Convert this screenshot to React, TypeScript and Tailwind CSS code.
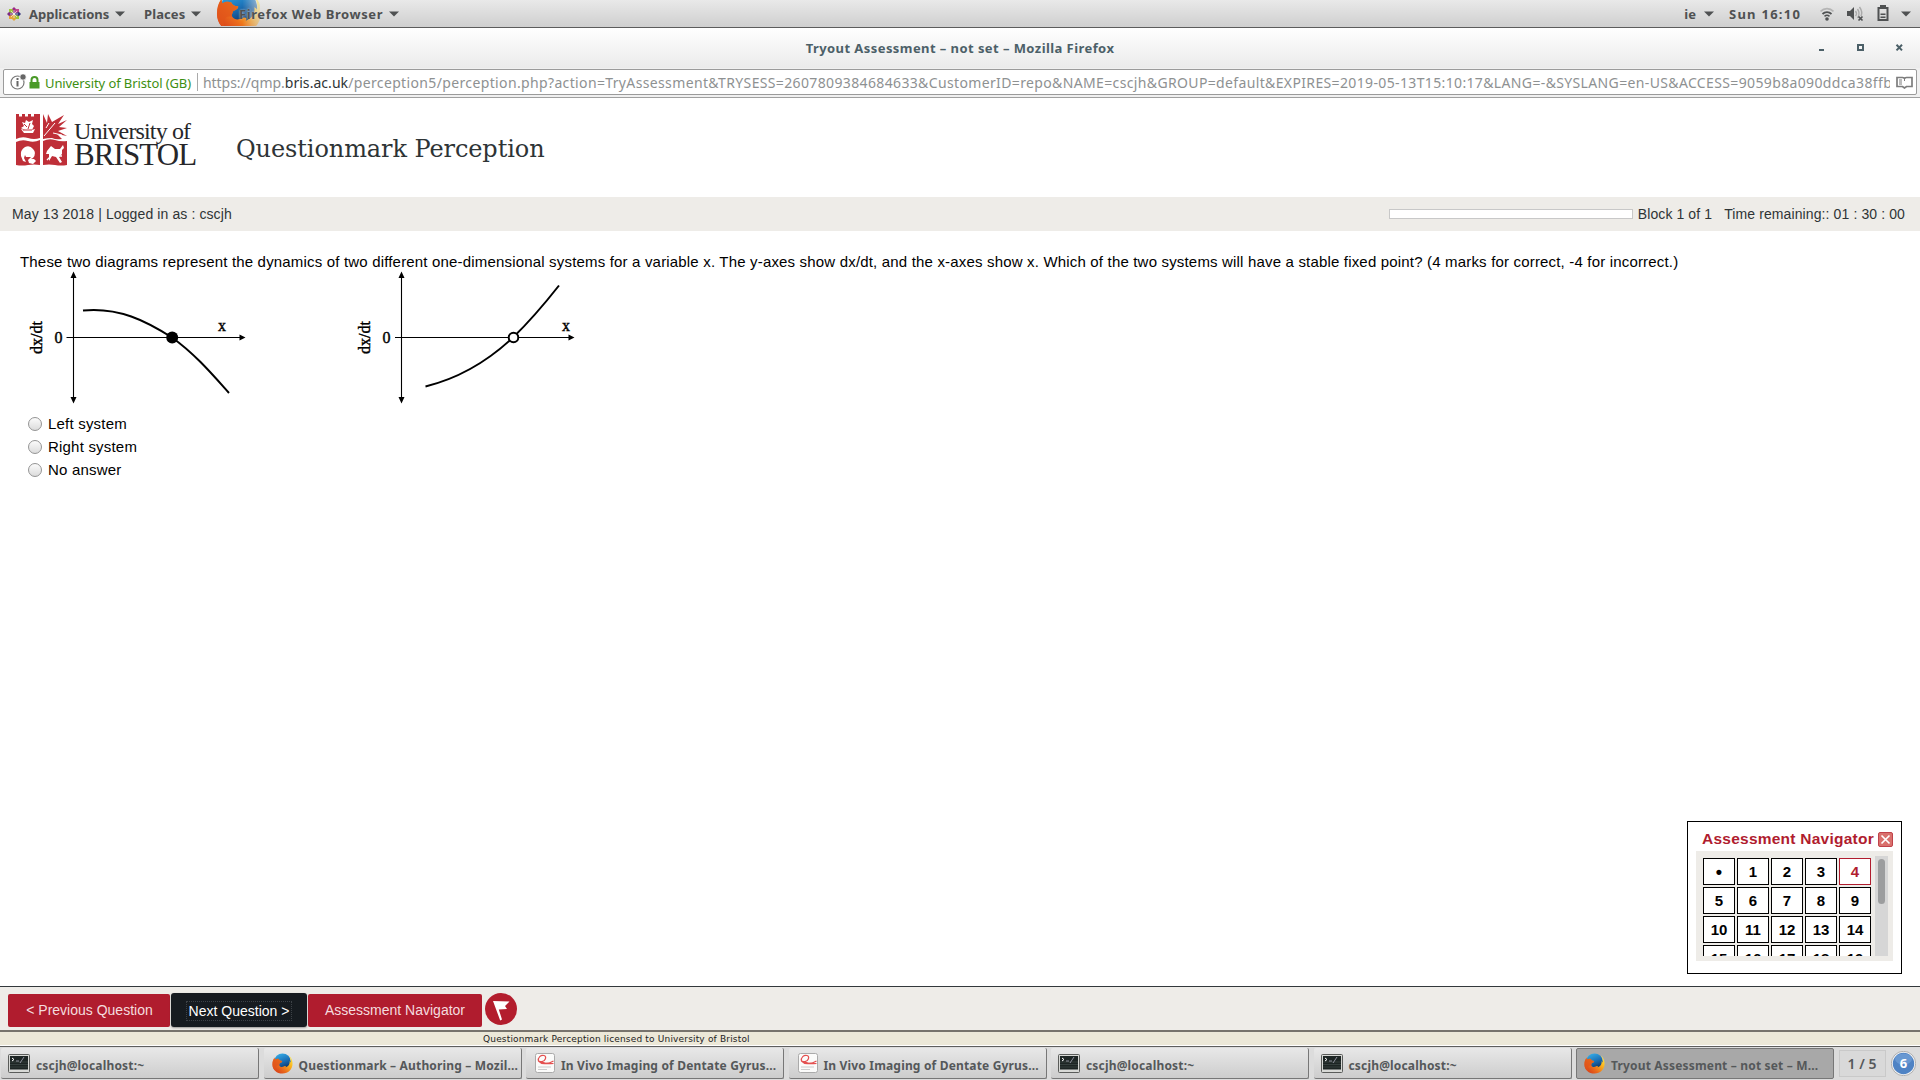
import React from "react";

function Caret({ className = "" }: { className?: string }) {
  return (
    <svg className={"shrink-0 " + className} width="10" height="6" viewBox="0 0 10 6">
      <path d="M0 0.5h10L5 5.5z" fill="#4f5152" />
    </svg>
  );
}

function Firefox({ size, id, className = "" }: { size: number; id: string; className?: string }) {
  return (
    <svg className={"shrink-0 " + className} width={size} height={size} viewBox="0 0 48 48">
      <defs>
        <linearGradient id={id + "o"} x1="1" y1="0.1" x2="0.15" y2="0.9">
          <stop offset="0" stopColor="#fff04a" />
          <stop offset="0.35" stopColor="#fbb31c" />
          <stop offset="0.7" stopColor="#ea6a1c" />
          <stop offset="1" stopColor="#d8401a" />
        </linearGradient>
        <linearGradient id={id + "b"} x1="0.2" y1="0" x2="0.6" y2="1">
          <stop offset="0" stopColor="#36b0ea" />
          <stop offset="0.5" stopColor="#1c72b8" />
          <stop offset="1" stopColor="#0b2c60" />
        </linearGradient>
      </defs>
      <circle cx="24" cy="20" r="19" fill={`url(#${id}b)`} />
      <path d="M38 5c6 5 9 12 9 19 0 13-10 23-23 23S1 38 1 26c0-7 2-12 5-16 0 2 0 4 1 5 3-2 6-2 9-1 1 2 3 4 7 4 1 2-2 4-5 5-1 3-2 4-1 6 3 4 7 3 11 1 3-1 5 1 3 3 8-3 10-9 9-14 2 1 3 2 3 4 1-7-1-13-5-18z" fill={`url(#${id}o)`} />
      <path d="M6 10c0 2 0 4 1 5 3-2 6-2 9-1 1 2 3 4 7 4 1 2-2 4-5 5-1 3-2 4-1 6-5-1-9 1-9 6 0 3 2 6 5 8C5 40 1 33 1 26c0-7 2-12 5-16z" fill="#e2561b" opacity=".75" />
    </svg>
  );
}

function Activities() {
  return (
    <svg className="shrink-0" width="14" height="14" viewBox="0 0 14 14">
      <path d="M7 0l2 2v4H5V2z" fill="#9a2a86" />
      <path d="M14 7l-2 2H8V5h4z" fill="#33337c" />
      <path d="M7 14l-2-2V8h4v4z" fill="#e0a63a" />
      <path d="M0 7l2-2h4v4H2z" fill="#7d2c83" />
      <path d="M2 2h3.500l1 4.500L2 5z" fill="#9cc93a" />
      <path d="M12 2v3l-4.500 1.500L8.500 2z" fill="#c1478f" />
      <path d="M12 12H9L7.500 7.500 12 9z" fill="#9cc93a" />
      <path d="M2 12V9l4.500-1.500L5 12z" fill="#e8a33a" />
      <path d="M7 3v8M3 7h8M4 4l6 6M10 4l-6 6" stroke="#f0f0f0" strokeWidth=".7" />
    </svg>
  );
}

function TopBar() {
  return (
    <div className="flex h-[28px] items-center border-b border-[#5c5c5c] bg-linear-to-b from-[#e9e9e9] to-[#cfcfcf] font-['Noto_Sans'] text-[13px] leading-[28px] font-bold text-[#4f5152]">
      <div className="flex w-[144px] items-center pl-[7px]">
        <Activities />
        <span className="ml-[8px]">Applications</span>
        <Caret className="ml-[6px]" />
      </div>
      <div className="flex w-[72px] items-center">
        <span className="tracking-[0.1px]">Places</span>
        <Caret className="ml-[6px]" />
      </div>
      <div className="relative flex h-[27px] items-center pl-[23px]">
        <div className="absolute top-0 left-0 h-[26px] w-[44px] overflow-hidden mask-r-from-60% mask-r-to-120%">
          <Firefox size={46} id="top" className="-mt-[11px]" />
        </div>
        <span className="relative tracking-[0.580px] [text-shadow:0_0_2px_#ddd]">Firefox Web Browser</span>
        <Caret className="ml-[6px]" />
      </div>
      <div className="ml-auto flex items-center pr-[9px]">
        <span>ie</span>
        <Caret className="ml-[8px]" />
        <span className="ml-[15px] w-[73px] tracking-[1.250px] whitespace-nowrap">Sun 16:10</span>
        <svg className="ml-[18px]" width="14" height="14" viewBox="0 0 14 14" fill="none">
          <path d="M0.500 4.500a9 9 0 0 1 13 0" stroke="#b5b5b5" strokeWidth="1.800" />
          <path d="M2.500 7a6.500 6.500 0 0 1 9 0" stroke="#4f5152" strokeWidth="1.800" />
          <path d="M4.500 9.300a4 4 0 0 1 5 0" stroke="#4f5152" strokeWidth="1.600" />
          <circle cx="7" cy="12" r="1.800" fill="#4f5152" />
        </svg>
        <svg className="ml-[13px]" width="17" height="16" viewBox="0 0 17 16" fill="none">
          <path d="M0 5h3l4-4v13l-4-4H0z" fill="#4f5152" />
          <path d="M8.500 5q2 2.500 0 5M10.500 3q3 4.500 0 9M12.500 1q3.500 5 1.500 9" stroke="#aaa" strokeWidth="1.400" />
          <path d="M11.500 10.500l4 4m0-4l-4 4" stroke="#4f5152" strokeWidth="1.700" />
        </svg>
        <svg className="mr-px ml-[13px] -translate-y-px" width="12" height="16" viewBox="0 0 12 16">
          <path d="M3 0h6v2h2.500v14H.5V2H3zM2.500 4v10h7V4z" fill="#4f5152" fillRule="evenodd" />
          <path d="M3.500 8.500h5v1.500h-5zM3.500 11.500h5V13h-5z" fill="#4f5152" />
        </svg>
        <Caret className="ml-[11px]" />
      </div>
    </div>
  );
}

function TitleBar() {
  return (
    <div className="relative flex h-[40px] items-center justify-center bg-linear-to-b from-white to-[#ebebeb] font-['Noto_Sans'] text-[13px] font-bold text-[#4c6068]">
      <span className="pt-px tracking-[0.430px]">Tryout Assessment – not set – Mozilla Firefox</span>
      <svg className="absolute top-[16px] left-[1819px]" width="84" height="8" viewBox="0 0 84 8">
        <path d="M0 5h5v2H0zM38 0h7v7h-7zM40 2v3h3V2z" fill="#4c6068" fillRule="evenodd" />
        <path d="M77.500 .8l5.500 5.600M83 .8l-5.500 5.600" stroke="#4c6068" strokeWidth="2" />
      </svg>
    </div>
  );
}

function UrlBar() {
  return (
    <div className="h-[30px] border-b border-[#a0a0a0] bg-[#f0f0f0] px-[3px] pt-[1px]">
      <div className="flex h-[26px] items-center rounded-[2px] border border-[#9b9b9b] bg-white font-['Noto_Sans'] text-[14px] leading-[24px]">
        <svg className="ml-[6px] shrink-0" width="17" height="16" viewBox="0 0 17 16" fill="none">
          <circle cx="7.500" cy="8.500" r="6.500" stroke="#777" strokeWidth="1.200" />
          <path d="M6.500 4h2v2h-2zM6.500 7h2v5.500h-2z" fill="#666" />
          <circle cx="13" cy="3" r="3.200" fill="#666" stroke="#fff" strokeWidth=".8" />
        </svg>
        <svg className="ml-[2px] shrink-0" width="11" height="13" viewBox="0 0 11 13">
          <path d="M0.500 6h10v6.500H.5z" fill="#4a9a28" />
          <path d="M2.500 6.500V4a3 3 0 0 1 6 0v2.500" stroke="#4a9a28" strokeWidth="2" fill="none" />
        </svg>
        <span className="ml-[5px] w-[148px] shrink-0 pt-px text-[13px] tracking-[-0.1px] whitespace-nowrap text-[#3d8f12]">University of Bristol (GB)</span>
        <div className="ml-[4px] h-[18px] w-px shrink-0 bg-[#aaa]" />
        <div className="ml-[5px] w-[1687px] overflow-hidden pt-[2px] tracking-[0.360px] whitespace-nowrap text-[#8e9192]">
          <span className="tracking-[-0.050px]">https://qmp.</span>
          <span className="tracking-[0.050px] text-[#2e3436]">bris.ac.uk</span>
          /perception5/perception.php?action=TryAssessment&amp;TRYSESS=2607809384684633&amp;CustomerID=repo&amp;NAME=cscjh&amp;GROUP=default&amp;EXPIRES=2019-05-13T15:10:17&amp;LANG=-&amp;SYSLANG=en-US&amp;ACCESS=9059b8a090ddca38ffb1
        </div>
        <svg className="ml-[6px] shrink-0" width="17" height="13" viewBox="0 0 17 13" fill="none" stroke="#7d7d7d">
          <path d="M1 1.500h5.500q2 0 2 1.500 0-1.500 2-1.500H16v9h-5.500L8.500 12l-2-1.500H1z" strokeWidth="1.700" />
          <path d="M3 4h3M3 6h3M3 8h3M8.500 3v2" strokeWidth="1" />
        </svg>
      </div>
    </div>
  );
}

function Crest() {
  return (
    <svg className="shrink-0" width="51" height="52" viewBox="0 0 51 52">
      <path d="M0 0h3v2.500h3V0h3v2.500h3V0h3v2.500h3V0h6v24Q18 26 12 24T0 25z" fill="#bf2f38" />
      <path d="M27 0l4 9 1-9 4 8 12-7-6 9 9-4-8 7 8 1-9 3 9 5-10-2 5 5q-6 1-10-1-5 0-9 1z" fill="#bf2f38" />
      <path d="M28 22l11-13M30 14l3-5M37 19l9 2" stroke="#fff" strokeWidth="1" />
      <path d="M0 28q6-3 12-1t12-1v25q-6-1-12 0T0 51z" fill="#bf2f38" />
      <path d="M27 27q6-3 12-1t12 1v24q-6 1-12 0t-12 0z" fill="#bf2f38" />
      <path d="M6 8l3 1 1-3 3 2 4-2-1 4 2 2-2 4 3-1-2 4H8l-3-4 4 1-4-2 3-2z" fill="#fff" />
      <path d="M8 10l3 3M14 9l-2 6M7 16l9 0" stroke="#bf2f38" strokeWidth="1" />
      <path d="M5 42q-1-6 4-9 5-2 8 2 4 4 0 9l-2 1 3 0 2 2-3 3-4-1-1-3 3-3-5 0-1-2-1 3 2 4-3-1z" fill="#fff" />
      <path d="M31 37l4-5 4 3 5 0 3-4 1 3-2 2 0 4-3 3 3 5-2 1-4-6-4-1-3 5 0-7-3 0 1-3z" fill="#fff" />
      <path d="M42 42l4 0M31 46l4-4" stroke="#fff" strokeWidth="1.300" />
    </svg>
  );
}

function Header() {
  return (
    <div className="flex h-[99px] bg-white pt-[16px] pl-[16px]">
      <Crest />
      <div className="ml-[7px] w-[122px] font-['Liberation_Serif'] whitespace-nowrap text-[#27272a]">
        <div className="mt-[5px] h-[24px] text-[24px] leading-[24px] tracking-[-0.850px]">University of</div>
        <div className="text-[31px] leading-[24px] tracking-[-0.9px]">BRISTOL</div>
      </div>
      <h1 className="mt-[20px] ml-[40px] font-['DejaVu_Serif'] text-[24px] leading-[30px] tracking-[-0.090px] text-[#2e3436]">Questionmark Perception</h1>
    </div>
  );
}

function StatusBar() {
  return (
    <div className="flex h-[34px] items-center bg-[#eeece8] pr-[15px] pl-[12px] font-['Liberation_Sans'] text-[14px] text-[#2e3436]">
      <span className="tracking-[0.110px]">May 13 2018 | Logged in as : cscjh</span>
      <div className="ml-auto h-[10px] w-[244px] border border-[#c8c8c8] bg-white" />
      <span className="ml-[5px] tracking-[0.1px]">Block 1 of 1</span>
      <span className="ml-[12px] tracking-[0.110px]">Time remaining:: 01 : 30 : 00</span>
    </div>
  );
}

function Diagrams() {
  return (
    <svg className="block" width="580" height="134" viewBox="20 271 580 134">
      <g fill="none" stroke="#000">
        <path d="M73.500 277v122M66.500 337.500H240M401.500 277v122M395 337.500h174" strokeWidth="1.100" />
        <path d="M83 310.500C119 307 146 321 172 337.500 195 354 212 374 229 393" strokeWidth="2" />
        <path d="M425.500 386.500C460 378 488 361 513 337.500 531 320 546 302 559 285.500" strokeWidth="2" />
      </g>
      <path d="M73.500 271.500l3 6.500h-6zM73.500 403.500l3-6.500h-6zM245.500 337.500l-6-3v6zM401.500 271.500l3 6.500h-6zM401.500 403.500l3-6.500h-6zM574.500 337.500l-6-3v6z" />
      <circle cx="172.200" cy="337.500" r="6" />
      <circle cx="513.500" cy="337.500" r="4.800" fill="#fff" stroke="#000" strokeWidth="2" />
      <g fontFamily="Liberation Serif" fontSize="16" textAnchor="middle" stroke="#000" strokeWidth=".4">
        <text x="58.500" y="343">0</text>
        <text x="386.500" y="343">0</text>
        <text x="222" y="331">x</text>
        <text x="566" y="331">x</text>
        <text transform="translate(42 337.500) rotate(-90)">dx/dt</text>
        <text transform="translate(370 337.500) rotate(-90)">dx/dt</text>
      </g>
    </svg>
  );
}

function Question() {
  return (
    <div className="h-[755px] bg-white pt-[20px] pl-[20px] font-['Liberation_Sans'] text-[15px] text-black">
      <p className="h-[20px] leading-[21px] tracking-[0.177px] whitespace-nowrap">
        These two diagrams represent the dynamics of two different one-dimensional systems for a variable x. The y-axes show dx/dt, and the x-axes show x. Which of the two systems will have a stable fixed point? (4 marks for correct, -4 for incorrect.)
      </p>
      <Diagrams />
      <div className="pt-[7px] pl-[8px]">
        {["Left system", "Right system", "No answer"].map((t) => (
          <div key={t} className="flex h-[23px] items-center gap-[6px]">
            <span className="h-[14px] w-[14px] rounded-full border border-[#949494] bg-linear-to-b from-[#fbfbfb] to-[#dcdcdc]" />
            <span className="pt-px tracking-[0.2px]">{t}</span>
          </div>
        ))}
      </div>
    </div>
  );
}

function Navigator() {
  const cells = ["•", ...Array.from({ length: 19 }, (_, i) => String(i + 1))];
  return (
    <div className="absolute top-[821px] left-[1687px] h-[153px] w-[215px] border border-black bg-white pt-[8px] pl-[8px] font-['Liberation_Sans'] font-bold">
      <div className="flex h-[21px] items-center pb-[3px] pl-[6px] text-[15.500px] text-[#b01c2e]">
        <span className="w-[176px] tracking-[0.240px] whitespace-nowrap">Assessment Navigator</span>
        <svg width="15" height="15" viewBox="0 0 15 15">
          <rect x=".5" y=".5" width="14" height="14" rx="1.500" fill="#d9706c" stroke="#c0424a" />
          <path d="M3.500 3.500l8 8m0-8l-8 8" stroke="#fff" strokeWidth="1.700" />
        </svg>
      </div>
      <div className="flex h-[110px] w-[197px] bg-[#eeece8] py-[5px] pl-[7px]">
        <div className="grid h-[100px] w-[168px] auto-rows-[27px] grid-cols-[repeat(5,32px)] gap-[2px] overflow-hidden pt-[2px]">
          {cells.map((c) => (
            <div
              key={c}
              className={
                c === "4"
                  ? "border border-[#b01c2e] bg-white text-center text-[15px] leading-[26px] text-[#b01c2e]"
                  : c === "•"
                    ? "border border-black bg-white text-center text-[18px] leading-[26px] text-black"
                    : "border border-black bg-white text-center text-[15px] leading-[26px] text-black"
              }
            >
              {c}
            </div>
          ))}
        </div>
        <div className="ml-[4px] h-[100px] w-[13px] bg-[#d6d6d6] px-[3px] pt-[3px]">
          <div className="h-[45px] w-[7px] rounded-full bg-[#9c9d9e]" />
        </div>
      </div>
    </div>
  );
}

function Footer() {
  return (
    <>
      <div className="flex h-[44px] items-start border-t border-[#33383b] bg-[#eeece8] pt-[7px] pl-[8px] font-['Liberation_Sans'] text-[14px] text-white">
        <div className="flex h-[33px] w-[162px] items-center justify-center rounded-[2px] bg-[#b01c2e] pl-px text-[#f4dcdf]">&lt; Previous Question</div>
        <div className="ml-px flex h-[34px] w-[136px] -translate-y-px items-center justify-center rounded-[3px] bg-[#161b20] pt-[1px] shadow-[0_1px_2px_rgba(0,0,0,0.35)]">
          <span className="border border-dotted border-[#3d4247] px-[2px] leading-[18px]">Next Question &gt;</span>
        </div>
        <div className="ml-px flex h-[33px] w-[174px] items-center justify-center rounded-[2px] bg-[#b01c2e] text-[#f4dcdf]">Assessment Navigator</div>
        <svg className="-mt-px ml-[3px]" width="32" height="32" viewBox="0 0 32 32">
          <circle cx="16" cy="16" r="16" fill="#b31d2d" />
          <path d="M8 8L24.500 8.500 20 13 22 16 13.800 16.500 17 26.500 15.200 27.500z" fill="#fff" />
        </svg>
      </div>
      <div className="h-[16px] border-t-2 border-b border-t-[#77736c] border-b-white bg-[#ece8d8] pl-[483px] font-['DejaVu_Sans'] text-[9px] leading-[14px] tracking-[0.170px] text-[#222]">
        Questionmark Perception licensed to University of Bristol
      </div>
    </>
  );
}

function TerminalIcon() {
  return (
    <svg className="shrink-0" width="22" height="19" viewBox="0 0 22 19">
      <rect x=".5" y=".5" width="21" height="18" rx="1" fill="#d8d9d6" stroke="#5a5c5a" />
      <rect x="2" y="2" width="18" height="13.500" fill="#1d2524" />
      <path d="M2 8h18M2 10.500h18M2 13h18" stroke="#3c4845" strokeWidth=".8" />
      <path d="M4 4l2 1.500L4 7" stroke="#fff" fill="none" />
      <path d="M8 7h3M12 9l4-6" stroke="#aab" strokeWidth=".8" />
    </svg>
  );
}

function DocIcon() {
  return (
    <svg className="ml-[2px] shrink-0" width="20" height="20" viewBox="0 0 20 20">
      <rect x=".5" y=".5" width="19" height="19" rx="2" fill="#fbfbfa" stroke="#aaa" />
      <path d="M3.500 8C2.500 4.500 6 1.500 9 2.500s1.500 5.500-2 6-3.500-1-3.500-.5C6 11 12 12 18.500 8M7 9q4 2 11.500 1.500" stroke="#e45050" strokeWidth="1.200" fill="none" />
      <path d="M3 14h13M3 16.500h9" stroke="#ccc" />
    </svg>
  );
}

const tasks = [
  { icon: "term", label: "cscjh@localhost:~" },
  { icon: "fx", label: "Questionmark – Authoring – Mozil..." },
  { icon: "doc", label: "In Vivo Imaging of Dentate Gyrus..." },
  { icon: "doc", label: "In Vivo Imaging of Dentate Gyrus..." },
  { icon: "term", label: "cscjh@localhost:~" },
  { icon: "term", label: "cscjh@localhost:~" },
  { icon: "fx", label: "Tryout Assessment – not set – M...", active: true },
];

function Taskbar() {
  return (
    <div className="flex h-[34px] border-t border-[#5e5e5e] bg-[#dcdcdc] pt-[1px] pl-[1px] font-['Noto_Sans'] text-[12px] font-bold text-[#55585a]">
      {tasks.map((t, i) => (
        <div
          key={i}
          className={
            t.active
              ? "mr-[4.500px] flex h-[31px] w-[258px] items-center rounded-[2px] border border-[#777] bg-[#a8a8a8] pl-[6px]"
              : "mr-[4.500px] flex h-[31px] w-[258px] items-center rounded-[2px] border-r border-b border-[#777] bg-linear-to-b from-[#e8e8e8] to-[#cdcdcd] pl-[7px]"
          }
        >
          {t.icon === "term" && <TerminalIcon />}
          {t.icon === "fx" && <Firefox size={21} id={"fx" + i} className="ml-px" />}
          {t.icon === "doc" && <DocIcon />}
          <span className="ml-[6px] pt-[5px] tracking-[0.170px] whitespace-nowrap">{t.label}</span>
        </div>
      ))}
      <div className="mt-[2px] flex h-[27px] w-[47px] items-center justify-center border border-[#c9c9c9] bg-[#d9d9d9] text-[14px] font-semibold">1 / 5</div>
      <svg className="mt-[3px] ml-[5px]" width="25" height="25" viewBox="0 0 25 25">
        <circle cx="12.500" cy="12.500" r="11.500" fill="#4f83c4" stroke="#f2f2f2" strokeWidth="1.600" />
        <circle cx="12.500" cy="12.500" r="12.200" fill="none" stroke="#888" strokeWidth=".6" />
        <ellipse cx="12.500" cy="8" rx="8.500" ry="5.500" fill="#7aa6dc" opacity=".6" />
        <text x="12.500" y="17" textAnchor="middle" fontFamily="Noto Sans" fontSize="13" fontWeight="700" fill="#fff">6</text>
      </svg>
    </div>
  );
}

export default function App() {
  return (
    <div className="relative h-[1080px] w-[1920px] overflow-hidden bg-white">
      <TopBar />
      <TitleBar />
      <UrlBar />
      <Header />
      <StatusBar />
      <Question />
      <Footer />
      <Taskbar />
      <Navigator />
    </div>
  );
}
